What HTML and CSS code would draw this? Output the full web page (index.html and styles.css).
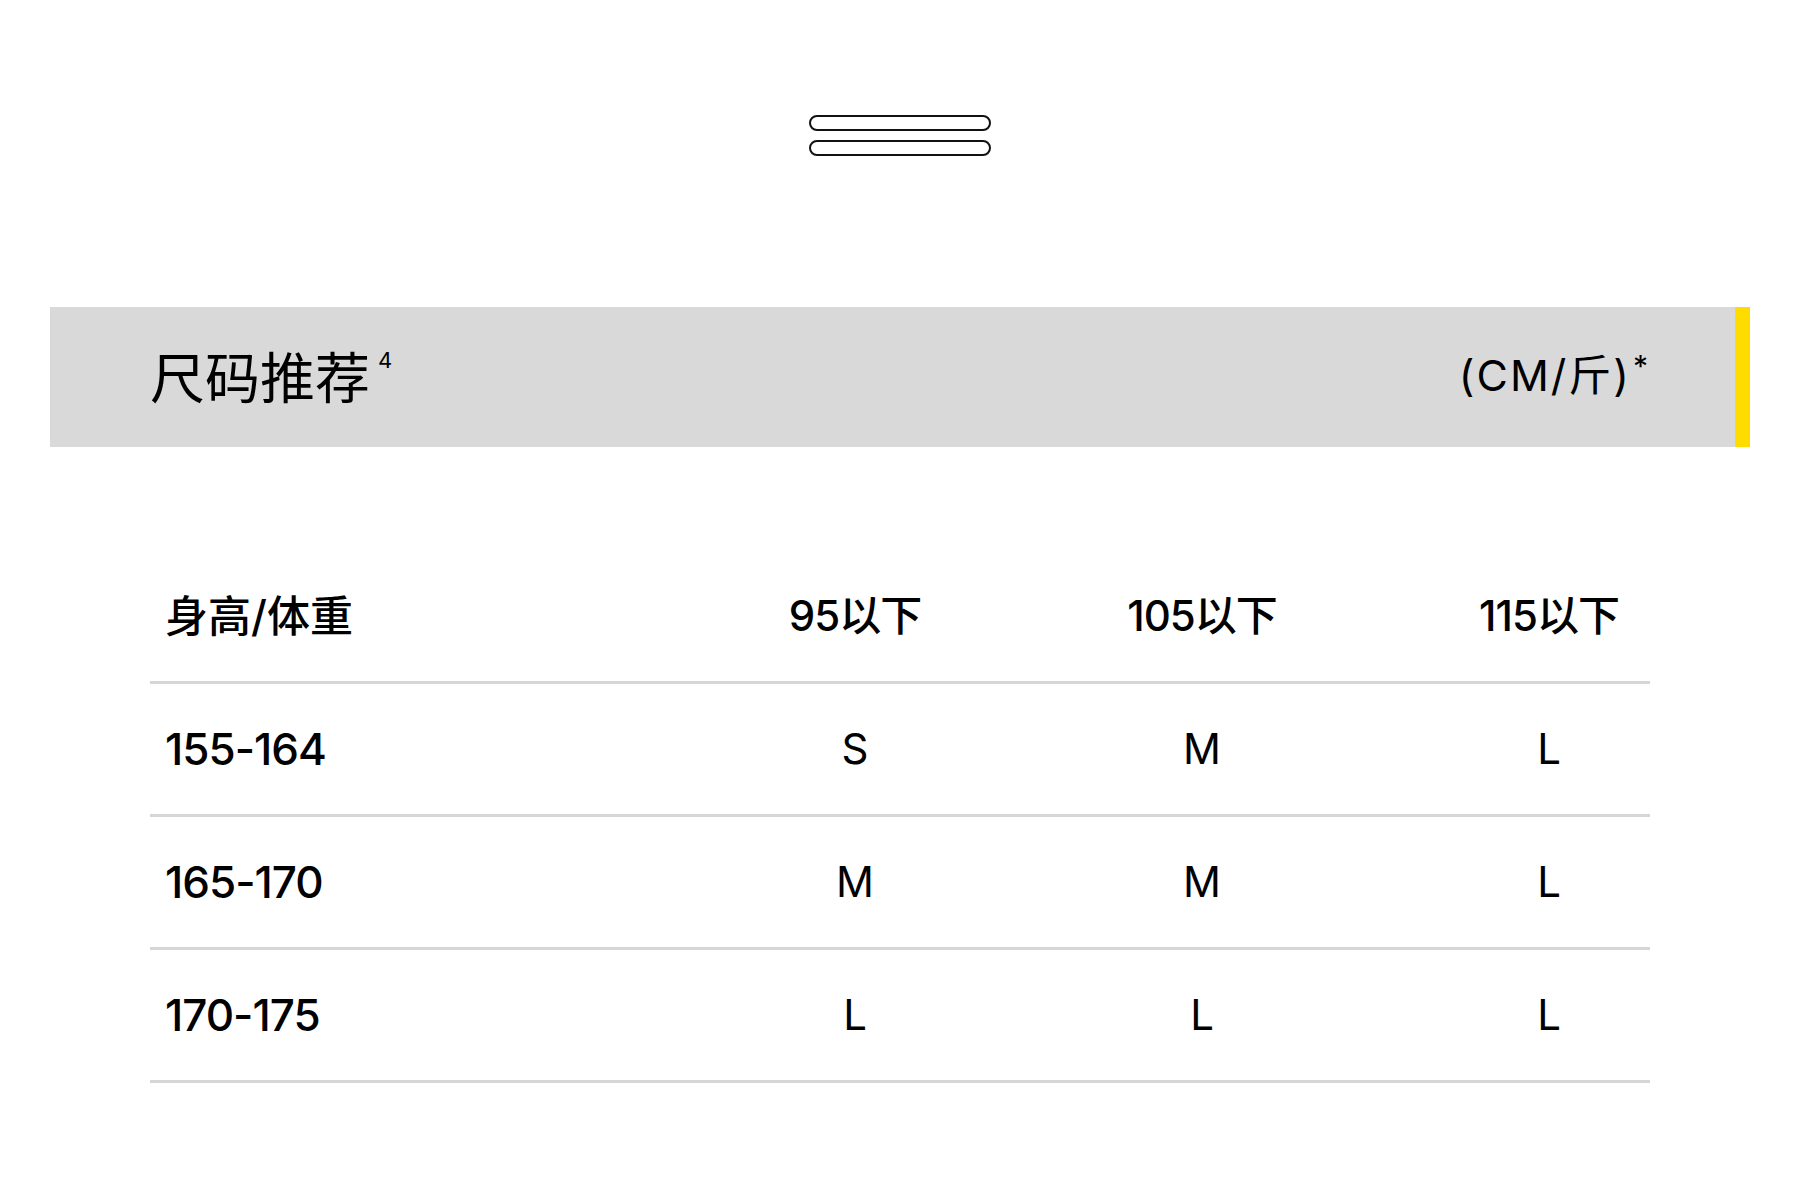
FILE: index.html
```html
<!DOCTYPE html>
<html lang="zh-CN">
<head>
<meta charset="utf-8">
<title>尺码推荐</title>
<link rel="stylesheet" href="styles.css">
</head>
<body>
<div class="top">
  <svg class="handle" width="182" height="43" viewBox="0 0 182 43">
    <rect x="1" y="1" width="180" height="14" rx="7" ry="7" fill="none" stroke="#111" stroke-width="2"/>
    <rect x="1" y="26" width="180" height="14" rx="7" ry="7" fill="none" stroke="#111" stroke-width="2"/>
  </svg>
</div>
<div class="band">
  <div class="band-title">尺码推荐<sup class="sup-num">4</sup></div>
  <div class="band-unit">(CM/斤)<sup class="sup-ast">*</sup></div>
</div>
<div class="size-table">
  <div class="row head">
    <div class="cell first">身高/体重</div>
    <div class="cell">95以下</div>
    <div class="cell">105以下</div>
    <div class="cell">115以下</div>
  </div>
  <div class="row">
    <div class="cell first num">155-164</div>
    <div class="cell size">S</div>
    <div class="cell size">M</div>
    <div class="cell size">L</div>
  </div>
  <div class="row">
    <div class="cell first num">165-170</div>
    <div class="cell size">M</div>
    <div class="cell size">M</div>
    <div class="cell size">L</div>
  </div>
  <div class="row">
    <div class="cell first num">170-175</div>
    <div class="cell size">L</div>
    <div class="cell size">L</div>
    <div class="cell size">L</div>
  </div>
</div>
</body>
</html>
```
FILE: styles.css
```css
html, body {
  margin: 0;
  padding: 0;
  background: #ffffff;
  color: #000;
  font-family: Inter, "Noto Sans CJK SC", sans-serif;
}

.top {
  display: flex;
  justify-content: center;
  padding-top: 115px;
}

.handle {
  display: block;
}

.band {
  margin: 149px 50px 0 50px;
  height: 140px;
  background: #d9d9d9;
  border-right: 15px solid #ffdc00;
  display: flex;
  align-items: center;
  justify-content: space-between;
  padding: 0 85px 0 100px;
}

.band-title {
  font-family: "Noto Sans CJK SC", sans-serif;
  font-size: 55px;
  font-weight: 400;
  line-height: 1;
  display: flex;
  align-items: flex-start;
  margin-top: -6px;
}

.sup-num {
  font-family: Inter, sans-serif;
  font-size: 22px;
  line-height: 1;
  vertical-align: baseline;
  margin-left: 8px;
  margin-top: 2px;
}

.band-unit {
  font-family: Inter, "Noto Sans CJK SC", sans-serif;
  font-size: 43px;
  letter-spacing: 2px;
  line-height: 1;
  display: flex;
  align-items: flex-start;
  margin-top: -4px;
}

.sup-ast {
  font-size: 30px;
  line-height: 1;
  margin-left: 2px;
  margin-top: -3px;
}

.size-table {
  margin: 104px 150px 0 150px;
}

.row {
  display: grid;
  grid-template-columns: 1fr 202px 202px 202px;
  column-gap: 145px;
  height: 130px;
  border-bottom: 3px solid #d6d6d6;
  align-items: center;
}

.cell {
  text-align: center;
  line-height: 1;
}

.cell.first {
  text-align: left;
  padding-left: 15px;
}

.head .cell {
  font-size: 42px;
  font-weight: 500;
  letter-spacing: -1px;
}

.head .cell.first {
  font-size: 43px;
  letter-spacing: 0;
}

.num {
  font-size: 44px;
  font-weight: 500;
  letter-spacing: -1px;
}

.size {
  font-size: 42px;
  font-weight: 400;
}
```
